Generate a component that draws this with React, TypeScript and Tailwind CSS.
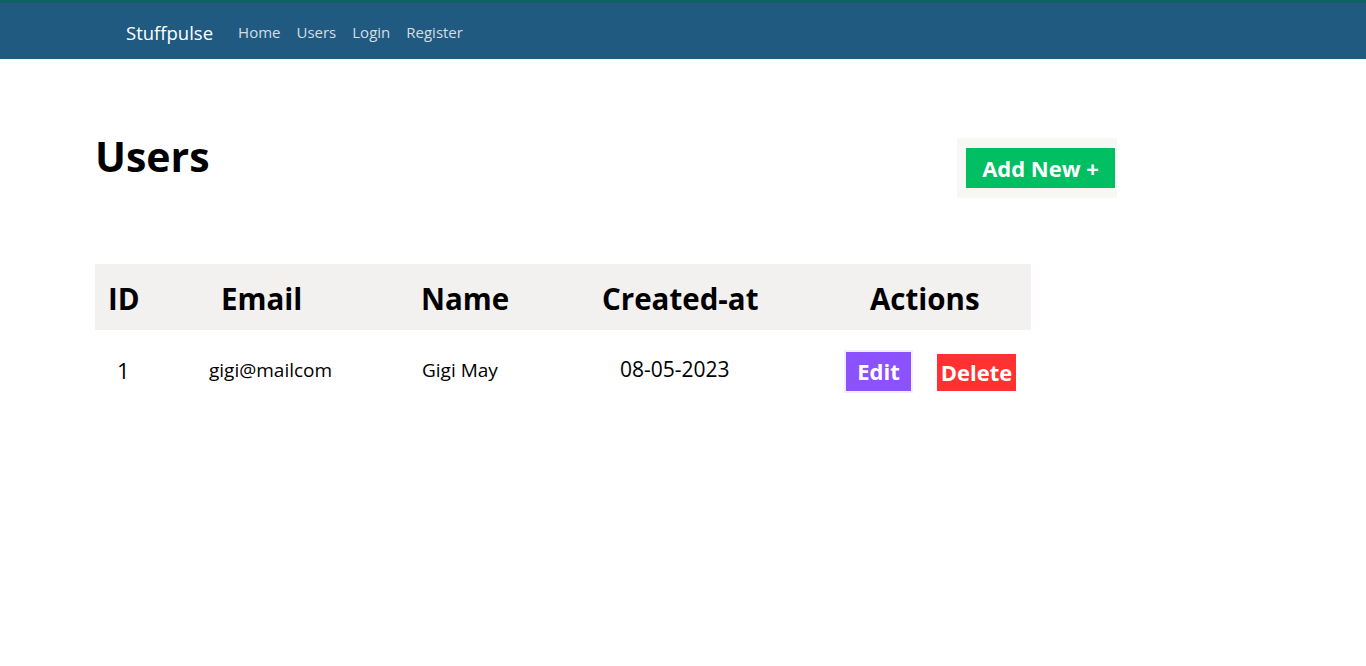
import React from "react";

export default function App() {
  const font = { fontFamily: '"Open Sans", "Noto Sans", sans-serif' };
  return (
    <div className="min-h-[666px] bg-white" style={font}>
      <div className="h-[3px] bg-[#0e6062]" />
      <nav className="flex h-[56px] items-center bg-[#215a80] pl-[126px] pt-[3px]">
        <span className="text-[18.5px] text-white">Stuffpulse</span>
        <div className="ml-[25px] flex gap-[16px] text-[15px] text-[#d5dee6]">
          <span>Home</span>
          <span>Users</span>
          <span>Login</span>
          <span>Register</span>
        </div>
      </nav>

      <div className="flex items-start pl-[95px] pt-[73px]">
        <h1 className="w-[862px] text-[41px] font-bold leading-[48px] text-black">Users</h1>
        <div className="mt-[6px] bg-[#f7f7f3] py-[10px] pl-[9px] pr-[2px]">
          <button className="h-[40px] w-[149px] bg-[#00bf63] text-[22px] font-bold text-white">
            Add New +
          </button>
        </div>
      </div>

      <div className="ml-[95px] mt-[66px] w-[936px]">
        <div className="flex h-[66px] items-center bg-[#f2f1ef] pt-[5px] text-[29.5px] font-bold text-black">
          <span className="w-[126px] pl-[13px]">ID</span>
          <span className="w-[200px]">Email</span>
          <span className="w-[181px]">Name</span>
          <span className="w-[268px]">Created-at</span>
          <span>Actions</span>
        </div>
        <div className="flex h-[80px] items-center text-black">
          <span className="w-[114px] pl-[22px] text-[22px]">1</span>
          <span className="w-[213px] text-[19px]">gigi@mailcom</span>
          <span className="w-[198px] text-[19px]">Gigi May</span>
          <span className="w-[226px] text-[21px]">08-05-2023</span>
          <button className="mt-[2px] h-[39px] w-[65px] bg-[#8c52ff] text-[22px] font-bold text-white shadow-[0_0_0_2px_#f3eeff]">
            Edit
          </button>
          <button className="ml-[26px] mt-[4px] h-[37px] w-[79px] bg-[#ff3131] text-[22px] font-bold text-white">
            Delete
          </button>
        </div>
      </div>
    </div>
  );
}
